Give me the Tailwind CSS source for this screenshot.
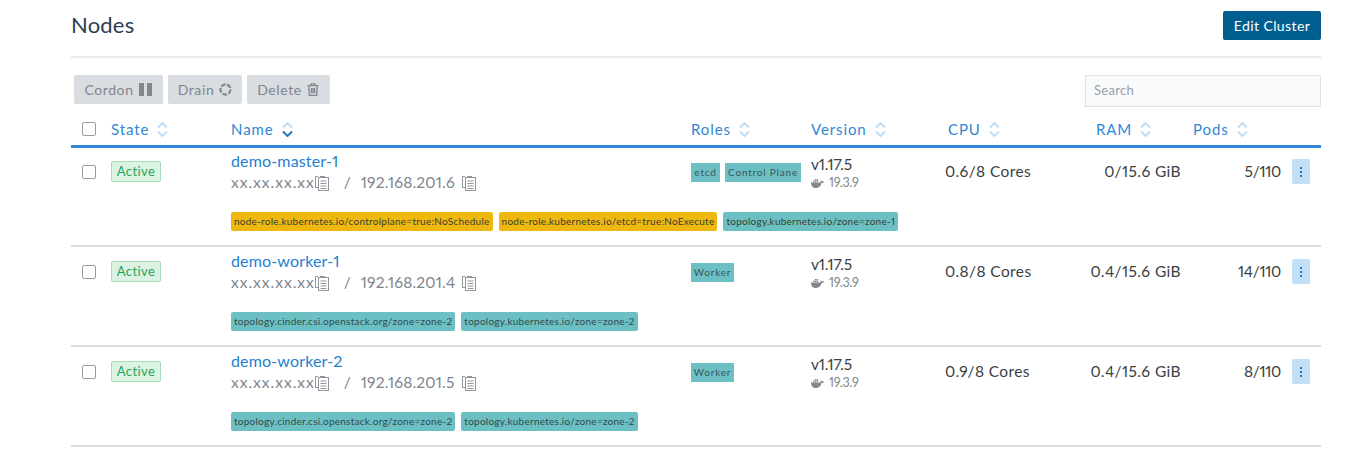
<!DOCTYPE html>
<html lang="en">
<head>
    <meta charset="UTF-8">
    <title>Nodes</title>
    <script src="https://cdn.jsdelivr.net/npm/@tailwindcss/browser@4"></script>
</head>
<body class="bg-white font-['Lato',sans-serif] proportional-nums text-[#3a3f44] h-[470px] overflow-hidden">
    <div class="ml-[71px] w-[1250px]">
        <!-- header -->
        <div class="flex items-center justify-between h-[58px] pb-[6px] border-b-2 border-[#e8ebec]">
            <h1 class="text-[22px] leading-[26px] text-[#2c3e50] tracking-[0.2px]">Nodes</h1>
            <button class="bg-[#005f8f] text-white text-[14px] tracking-[0.4px] w-[98px] h-[29px] rounded-[2px] mt-[1px]">Edit Cluster</button>
        </div>

        <!-- toolbar -->
        <div class="flex items-start justify-between h-[30px] mt-[17px]">
            <div class="flex gap-[5px] ml-[3px] text-[14px] tracking-[0.6px] text-[#80878e]">
                <div class="flex items-center justify-center gap-[5px] w-[89px] h-[29px] pr-[1px] bg-[#d9dce0] rounded-[2px]">Cordon
                    <svg class="w-[13px] h-[13px]" viewBox="0 0 13 13" fill="#80878e"><rect x="0" y="0" width="5" height="13"/><rect x="8" y="0" width="5" height="13"/></svg>
                </div>
                <div class="flex items-center justify-center gap-[5px] w-[74px] h-[29px] bg-[#d9dce0] rounded-[2px]">Drain
                    <svg class="w-[13px] h-[13px]" viewBox="0 0 14 14" fill="none" stroke="#80878e" stroke-width="2.4" stroke-dasharray="5 1.6"><circle cx="7" cy="7" r="5.4"/></svg>
                </div>
                <div class="flex items-center justify-center gap-[5px] w-[83px] h-[29px] pr-[1px] bg-[#d9dce0] rounded-[2px]">Delete
                    <svg class="w-[12px] h-[13px]" viewBox="0 0 12 13" fill="none" stroke="#80878e" stroke-width="1.3"><path d="M0.5 2.7h11M4 2.5V0.9h4v1.600M1.800 2.700l.5 9.600h7.400l.5-9.600M4.400 5v5.200M6 5v5.200M7.600 5v5.200"/></svg>
                </div>
            </div>
            <input placeholder="Search" class="w-[236px] h-[32px] px-2 pb-[2px] bg-[#f9fafb] border border-[#dde2e5] text-[13px] placeholder:text-[#98a0a8] tracking-[0.3px]">
        </div>

        <!-- table head -->
        <div class="grid grid-cols-[40px_120px_460px_120px_137px_148px_97px_1fr] items-center h-[43px] pt-[8px] border-b-[3px] border-[#3087d6] text-[15px] tracking-[0.9px] text-[#3087d6]">
            <div class="pl-[11px] flex"><span class="w-[14px] h-[14px] border border-[#9b9b9b] rounded-[2px] bg-white"></span></div>
            <div class="flex items-center gap-[8px]">State
                <svg class="w-[11px] h-[15px]" viewBox="0 0 11 15" fill="none" stroke="#bcdcf5" stroke-width="1.8"><path d="M1 5.500l4.500-4.500 4.500 4.500M1 9.500l4.500 4.500 4.500-4.500"/></svg>
            </div>
            <div class="flex items-center gap-[8px]">Name
                <svg class="w-[11px] h-[15px]" viewBox="0 0 11 15" fill="none" stroke="#bcdcf5" stroke-width="1.8"><path d="M1 5.500l4.500-4.500 4.500 4.500"/><path stroke="#1f75c4" stroke-width="2" d="M1 9.500l4.500 4.500 4.500-4.500"/></svg>
            </div>
            <div class="flex items-center gap-[8px]">Roles
                <svg class="w-[11px] h-[15px]" viewBox="0 0 11 15" fill="none" stroke="#bcdcf5" stroke-width="1.8"><path d="M1 5.500l4.500-4.500 4.500 4.500M1 9.500l4.500 4.500 4.500-4.500"/></svg>
            </div>
            <div class="flex items-center gap-[8px]">Version
                <svg class="w-[11px] h-[15px]" viewBox="0 0 11 15" fill="none" stroke="#bcdcf5" stroke-width="1.8"><path d="M1 5.500l4.500-4.500 4.500 4.500M1 9.500l4.500 4.500 4.500-4.500"/></svg>
            </div>
            <div class="flex items-center gap-[8px]">CPU
                <svg class="w-[11px] h-[15px]" viewBox="0 0 11 15" fill="none" stroke="#bcdcf5" stroke-width="1.8"><path d="M1 5.500l4.500-4.500 4.500 4.500M1 9.500l4.500 4.500 4.500-4.500"/></svg>
            </div>
            <div class="flex items-center gap-[8px]">RAM
                <svg class="w-[11px] h-[15px]" viewBox="0 0 11 15" fill="none" stroke="#bcdcf5" stroke-width="1.8"><path d="M1 5.500l4.500-4.500 4.500 4.500M1 9.500l4.500 4.500 4.500-4.500"/></svg>
            </div>
            <div class="flex items-center gap-[8px]">Pods
                <svg class="w-[11px] h-[15px]" viewBox="0 0 11 15" fill="none" stroke="#bcdcf5" stroke-width="1.8"><path d="M1 5.500l4.500-4.500 4.500 4.500M1 9.500l4.500 4.500 4.500-4.500"/></svg>
            </div>
        </div>

        <!-- demo-master-1 -->
        <div class="h-[100px] mt-[-1px] border-b-2 border-[#dcdce0]">
            <div class="grid grid-cols-[40px_120px_460px_120px_135px_125px_110px_100px_1fr] items-start h-[57px]">
                <div class="pl-[11px] pt-[18px] flex"><span class="w-[14px] h-[14px] border border-[#9b9b9b] rounded-[2px] bg-white"></span></div>
                <div class="pt-[14px] flex"><span class="w-[50px] h-[21px] leading-[19px] text-center text-[13px] tracking-[0.4px] text-[#27a35a] bg-[#dcf3e4] border border-[#a5dfba] rounded-[2px]">Active</span></div>
                <div class="pt-[2px]">
                    <div class="text-[16px] leading-[23px] tracking-[0.15px] text-[#2481d0]">demo-master-1</div>
                    <div class="flex items-center h-[22px] text-[15.5px] text-[#7f868d]">
                        <span class="tracking-[1px]">xx.xx.xx.xx</span>
                        <svg class="w-[14px] h-[16px]" viewBox="0 0 14 16" fill="none" stroke="#8f959b"><rect x="3.500" y="2.500" width="10" height="13"/><path d="M3 12.500H.5V1.500H3M5 1.500h5M5.500 6h6M5.500 8.500h6M5.500 11h6M5.500 13.500h6"/></svg>
                        <span class="ml-[15px]">/</span>
                        <span class="ml-[10px] tracking-[0.2px]">192.168.201.6</span>
                        <svg class="w-[14px] h-[16px] ml-[7px]" viewBox="0 0 14 16" fill="none" stroke="#8f959b"><rect x="3.500" y="2.500" width="10" height="13"/><path d="M3 12.500H.5V1.500H3M5 1.500h5M5.500 6h6M5.500 8.500h6M5.500 11h6M5.500 13.500h6"/></svg>
                    </div>
                </div>
                <div class="flex gap-[5px] pt-[16px] text-[10px] tracking-[0.8px] text-[#3c5558]">
                    <span class="w-[29px] text-center h-[19px] leading-[19px] bg-[#6cc0c4]">etcd</span>
                    <span class="w-[76px] text-center h-[19px] leading-[19px] bg-[#6cc0c4] whitespace-nowrap">Control Plane</span>
                </div>
                <div class="pt-[7px]">
                    <div class="text-[15.5px] leading-[21px] tracking-[-0.2px]">v1.17.5</div>
                    <div class="flex items-center gap-[5px] text-[12.5px] leading-[15px] tracking-[-0.2px] text-[#80878e]">
                        <svg class="w-[13px] h-[10px]" viewBox="0 0 13 10" fill="#80878e"><path d="M0 4.500h9.500c.5-.6.300-1.500-.2-2 .7-.2 1.300.3 1.500 1 .7-.3 1.500-.2 2.200.2-.5 1-1.500 1.300-2.400 1.200C9.800 8.300 7.500 10 4.500 10 1.500 10 0 7.500 0 4.500z"/><rect x="2" y="2.700" width="1.500" height="1.400"/><rect x="3.800" y="2.700" width="1.500" height="1.400"/><rect x="5.600" y="2.700" width="1.500" height="1.400"/><rect x="3.800" y="1" width="1.500" height="1.400"/><rect x="5.600" y="1" width="1.500" height="1.400"/></svg>
                        19.3.9
                    </div>
                </div>
                <div class="pt-[14px] -ml-[1px] text-[15.5px] leading-[20px] tracking-[0.4px]">0.6/8 Cores</div>
                <div class="pt-[14px] text-[15.5px] leading-[20px] tracking-[0.4px] text-right whitespace-nowrap">0/15.6 GiB</div>
                <div class="pt-[14px] text-[15.5px] leading-[20px] tracking-[-0.3px] text-right">5/110</div>
                <div class="pt-[12px] pl-[11px]"><div class="w-[18px] h-[25px] bg-[#c3dff5] rounded-[2px] flex flex-col items-center justify-center gap-[2px]"><i class="w-[2px] h-[2px] bg-[#1f75c4]"></i><i class="w-[2px] h-[2px] bg-[#1f75c4]"></i><i class="w-[2px] h-[2px] bg-[#1f75c4]"></i></div></div>
            </div>
            <div class="flex gap-[6px] ml-[160px] mt-[8px] text-[10px] tracking-[0.25px] text-[#3a3f2c]">
                <span class="h-[19px] leading-[19px] px-[3px] rounded-[2px] bg-[#efb810] whitespace-nowrap">node-role.kubernetes.io/controlplane=true:NoSchedule</span>
                <span class="h-[19px] leading-[19px] px-[3px] rounded-[2px] bg-[#efb810] whitespace-nowrap">node-role.kubernetes.io/etcd=true:NoExecute</span>
                <span class="h-[19px] leading-[19px] px-[3px] rounded-[2px] bg-[#6cc0c4] whitespace-nowrap">topology.kubernetes.io/zone=zone-1</span>
            </div>
        </div>

        <!-- demo-worker-1 -->
        <div class="h-[100px] border-b-2 border-[#dcdce0]">
            <div class="grid grid-cols-[40px_120px_460px_120px_135px_125px_110px_100px_1fr] items-start h-[57px]">
                <div class="pl-[11px] pt-[18px] flex"><span class="w-[14px] h-[14px] border border-[#9b9b9b] rounded-[2px] bg-white"></span></div>
                <div class="pt-[14px] flex"><span class="w-[50px] h-[21px] leading-[19px] text-center text-[13px] tracking-[0.4px] text-[#27a35a] bg-[#dcf3e4] border border-[#a5dfba] rounded-[2px]">Active</span></div>
                <div class="pt-[2px]">
                    <div class="text-[16px] leading-[23px] tracking-[0.15px] text-[#2481d0]">demo-worker-1</div>
                    <div class="flex items-center h-[22px] text-[15.5px] text-[#7f868d]">
                        <span class="tracking-[1px]">xx.xx.xx.xx</span>
                        <svg class="w-[14px] h-[16px]" viewBox="0 0 14 16" fill="none" stroke="#8f959b"><rect x="3.500" y="2.500" width="10" height="13"/><path d="M3 12.500H.5V1.500H3M5 1.500h5M5.500 6h6M5.500 8.500h6M5.500 11h6M5.500 13.500h6"/></svg>
                        <span class="ml-[15px]">/</span>
                        <span class="ml-[10px] tracking-[0.2px]">192.168.201.4</span>
                        <svg class="w-[14px] h-[16px] ml-[7px]" viewBox="0 0 14 16" fill="none" stroke="#8f959b"><rect x="3.500" y="2.500" width="10" height="13"/><path d="M3 12.500H.5V1.500H3M5 1.500h5M5.500 6h6M5.500 8.500h6M5.500 11h6M5.500 13.500h6"/></svg>
                    </div>
                </div>
                <div class="flex gap-[5px] pt-[16px] text-[10px] tracking-[0.8px] text-[#3c5558]">
                    <span class="w-[43px] text-center h-[19px] leading-[19px] bg-[#6cc0c4]">Worker</span>
                </div>
                <div class="pt-[7px]">
                    <div class="text-[15.5px] leading-[21px] tracking-[-0.2px]">v1.17.5</div>
                    <div class="flex items-center gap-[5px] text-[12.5px] leading-[15px] tracking-[-0.2px] text-[#80878e]">
                        <svg class="w-[13px] h-[10px]" viewBox="0 0 13 10" fill="#80878e"><path d="M0 4.500h9.500c.5-.6.300-1.500-.2-2 .7-.2 1.300.3 1.500 1 .7-.3 1.500-.2 2.200.2-.5 1-1.500 1.300-2.400 1.200C9.800 8.300 7.500 10 4.500 10 1.500 10 0 7.500 0 4.500z"/><rect x="2" y="2.700" width="1.500" height="1.400"/><rect x="3.800" y="2.700" width="1.500" height="1.400"/><rect x="5.600" y="2.700" width="1.500" height="1.400"/><rect x="3.800" y="1" width="1.500" height="1.400"/><rect x="5.600" y="1" width="1.500" height="1.400"/></svg>
                        19.3.9
                    </div>
                </div>
                <div class="pt-[14px] -ml-[1px] text-[15.5px] leading-[20px] tracking-[0.4px]">0.8/8 Cores</div>
                <div class="pt-[14px] text-[15.5px] leading-[20px] tracking-[0.4px] text-right whitespace-nowrap">0.4/15.6 GiB</div>
                <div class="pt-[14px] text-[15.5px] leading-[20px] tracking-[-0.3px] text-right">14/110</div>
                <div class="pt-[12px] pl-[11px]"><div class="w-[18px] h-[25px] bg-[#c3dff5] rounded-[2px] flex flex-col items-center justify-center gap-[2px]"><i class="w-[2px] h-[2px] bg-[#1f75c4]"></i><i class="w-[2px] h-[2px] bg-[#1f75c4]"></i><i class="w-[2px] h-[2px] bg-[#1f75c4]"></i></div></div>
            </div>
            <div class="flex gap-[6px] ml-[160px] mt-[8px] text-[10px] tracking-[0.25px] text-[#33494c]">
                <span class="h-[19px] leading-[19px] px-[3px] rounded-[2px] bg-[#6cc0c4] whitespace-nowrap">topology.cinder.csi.openstack.org/zone=zone-2</span>
                <span class="h-[19px] leading-[19px] px-[3px] rounded-[2px] bg-[#6cc0c4] whitespace-nowrap">topology.kubernetes.io/zone=zone-2</span>
            </div>
        </div>

        <!-- demo-worker-2 -->
        <div class="h-[100px] border-b-2 border-[#dcdce0]">
            <div class="grid grid-cols-[40px_120px_460px_120px_135px_125px_110px_100px_1fr] items-start h-[57px]">
                <div class="pl-[11px] pt-[18px] flex"><span class="w-[14px] h-[14px] border border-[#9b9b9b] rounded-[2px] bg-white"></span></div>
                <div class="pt-[14px] flex"><span class="w-[50px] h-[21px] leading-[19px] text-center text-[13px] tracking-[0.4px] text-[#27a35a] bg-[#dcf3e4] border border-[#a5dfba] rounded-[2px]">Active</span></div>
                <div class="pt-[2px]">
                    <div class="text-[16px] leading-[23px] tracking-[0.15px] text-[#2481d0]">demo-worker-2</div>
                    <div class="flex items-center h-[22px] text-[15.5px] text-[#7f868d]">
                        <span class="tracking-[1px]">xx.xx.xx.xx</span>
                        <svg class="w-[14px] h-[16px]" viewBox="0 0 14 16" fill="none" stroke="#8f959b"><rect x="3.500" y="2.500" width="10" height="13"/><path d="M3 12.500H.5V1.500H3M5 1.500h5M5.500 6h6M5.500 8.500h6M5.500 11h6M5.500 13.500h6"/></svg>
                        <span class="ml-[15px]">/</span>
                        <span class="ml-[10px] tracking-[0.2px]">192.168.201.5</span>
                        <svg class="w-[14px] h-[16px] ml-[7px]" viewBox="0 0 14 16" fill="none" stroke="#8f959b"><rect x="3.500" y="2.500" width="10" height="13"/><path d="M3 12.500H.5V1.500H3M5 1.500h5M5.500 6h6M5.500 8.500h6M5.500 11h6M5.500 13.500h6"/></svg>
                    </div>
                </div>
                <div class="flex gap-[5px] pt-[16px] text-[10px] tracking-[0.8px] text-[#3c5558]">
                    <span class="w-[43px] text-center h-[19px] leading-[19px] bg-[#6cc0c4]">Worker</span>
                </div>
                <div class="pt-[7px]">
                    <div class="text-[15.5px] leading-[21px] tracking-[-0.2px]">v1.17.5</div>
                    <div class="flex items-center gap-[5px] text-[12.5px] leading-[15px] tracking-[-0.2px] text-[#80878e]">
                        <svg class="w-[13px] h-[10px]" viewBox="0 0 13 10" fill="#80878e"><path d="M0 4.500h9.500c.5-.6.300-1.500-.2-2 .7-.2 1.300.3 1.500 1 .7-.3 1.500-.2 2.200.2-.5 1-1.500 1.300-2.400 1.200C9.800 8.300 7.500 10 4.500 10 1.500 10 0 7.500 0 4.500z"/><rect x="2" y="2.700" width="1.500" height="1.400"/><rect x="3.800" y="2.700" width="1.500" height="1.400"/><rect x="5.600" y="2.700" width="1.500" height="1.400"/><rect x="3.800" y="1" width="1.500" height="1.400"/><rect x="5.600" y="1" width="1.500" height="1.400"/></svg>
                        19.3.9
                    </div>
                </div>
                <div class="pt-[14px] -ml-[1px] text-[15.5px] leading-[20px] tracking-[0.4px]">0.9/8 Cores</div>
                <div class="pt-[14px] text-[15.5px] leading-[20px] tracking-[0.4px] text-right whitespace-nowrap">0.4/15.6 GiB</div>
                <div class="pt-[14px] text-[15.5px] leading-[20px] tracking-[-0.3px] text-right">8/110</div>
                <div class="pt-[12px] pl-[11px]"><div class="w-[18px] h-[25px] bg-[#c3dff5] rounded-[2px] flex flex-col items-center justify-center gap-[2px]"><i class="w-[2px] h-[2px] bg-[#1f75c4]"></i><i class="w-[2px] h-[2px] bg-[#1f75c4]"></i><i class="w-[2px] h-[2px] bg-[#1f75c4]"></i></div></div>
            </div>
            <div class="flex gap-[6px] ml-[160px] mt-[8px] text-[10px] tracking-[0.25px] text-[#33494c]">
                <span class="h-[19px] leading-[19px] px-[3px] rounded-[2px] bg-[#6cc0c4] whitespace-nowrap">topology.cinder.csi.openstack.org/zone=zone-2</span>
                <span class="h-[19px] leading-[19px] px-[3px] rounded-[2px] bg-[#6cc0c4] whitespace-nowrap">topology.kubernetes.io/zone=zone-2</span>
            </div>
        </div>
    </div>
</body>
</html>
